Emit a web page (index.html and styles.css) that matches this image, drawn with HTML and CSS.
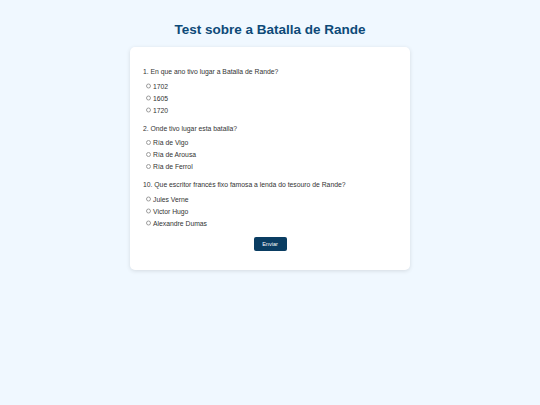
FILE: index.html
```html
<!DOCTYPE html>
<html lang="gl">
<head>
<meta charset="utf-8">
<title>Test sobre a Batalla de Rande</title>
<link rel="stylesheet" href="styles.css">
</head>
<body>
<h1 class="title">Test sobre a Batalla de Rande</h1>
<form class="card">
  <div class="question">
    <p class="q-label">1. En que ano tivo lugar a Batalla de Rande?</p>
    <label class="option"><input type="radio" name="q1"><span>1702</span></label>
    <label class="option"><input type="radio" name="q1"><span>1605</span></label>
    <label class="option"><input type="radio" name="q1"><span>1720</span></label>
  </div>
  <div class="question">
    <p class="q-label">2. Onde tivo lugar esta batalla?</p>
    <label class="option"><input type="radio" name="q2"><span>Ría de Vigo</span></label>
    <label class="option"><input type="radio" name="q2"><span>Ría de Arousa</span></label>
    <label class="option"><input type="radio" name="q2"><span>Ría de Ferrol</span></label>
  </div>
  <div class="question">
    <p class="q-label">10. Que escritor francés fixo famosa a lenda do tesouro de Rande?</p>
    <label class="option"><input type="radio" name="q3"><span>Jules Verne</span></label>
    <label class="option"><input type="radio" name="q3"><span>Victor Hugo</span></label>
    <label class="option"><input type="radio" name="q3"><span>Alexandre Dumas</span></label>
  </div>
  <div class="actions">
    <button type="button" class="submit">Enviar</button>
  </div>
</form>
</body>
</html>
```

FILE: styles.css
```css
html, body {
  margin: 0;
  padding: 0;
}
body {
  background: #f0f8ff;
  font-family: "Liberation Sans", Arial, sans-serif;
  color: #333;
  min-height: 405px;
}
.title {
  margin: 0;
  padding-top: 21px;
  height: 26px;
  line-height: 18px;
  font-size: 13.5px;
  font-weight: bold;
  color: #0d4a78;
  text-align: center;
}
.card {
  width: 254px;
  margin: 0 auto;
  background: #fff;
  border-radius: 5px;
  box-shadow: 0 1px 4px rgba(0, 0, 0, 0.12);
  padding: 20px 13px 19px 13px;
  display: flex;
  flex-direction: column;
}
.question {
  display: flex;
  flex-direction: column;
  margin-bottom: 7.5px;
}
.q-label {
  margin: 0 0 3px 0;
  font-size: 6.8px;
  line-height: 10px;
  color: #333;
}
.option {
  display: flex;
  align-items: center;
  height: 12px;
  font-size: 6.8px;
  color: #333;
}
.option input {
  width: 5.5px;
  height: 5.5px;
  margin: 0 2px 0 2.5px;
  opacity: 0.7;
}
.actions {
  display: flex;
  justify-content: center;
}
.submit {
  width: 33px;
  height: 14px;
  padding: 0;
  border: none;
  border-radius: 2px;
  background: #0a3d62;
  color: #fff;
  font-family: "Liberation Sans", Arial, sans-serif;
  font-size: 5.5px;
}
```
